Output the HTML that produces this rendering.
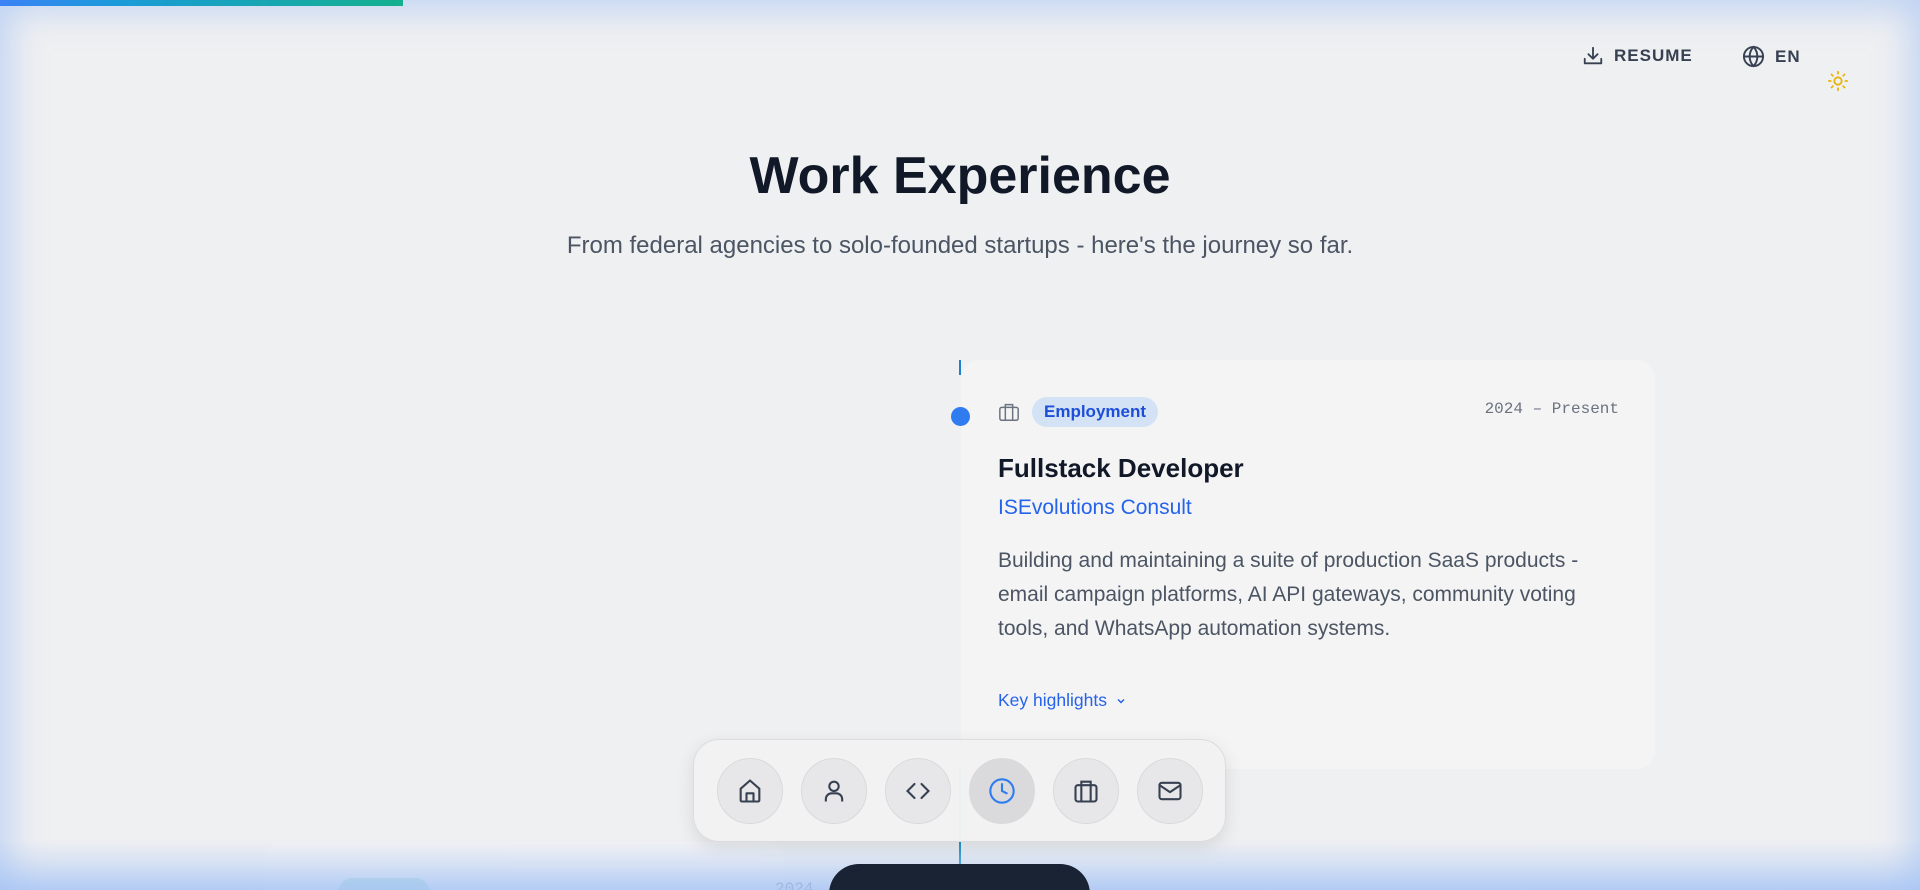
<!DOCTYPE html>
<html><head><meta charset="utf-8"><style>
*{margin:0;padding:0;box-sizing:border-box}
html,body{width:1920px;height:890px;overflow:hidden}
body{background:#eff0f2;font-family:"Liberation Sans",sans-serif;position:relative}
.vig{position:absolute;inset:0;pointer-events:none;box-shadow:inset 0 0 36px 8px rgba(140,180,245,.5);z-index:50}
.bot{position:absolute;left:0;right:0;bottom:0;height:50px;background:linear-gradient(to bottom,rgba(190,212,245,0),rgba(185,208,245,.75));z-index:40}
.bar{position:absolute;left:0;top:0;width:403px;height:6px;background:linear-gradient(90deg,#3b82f6,#1a9bd8 30%,#14b08e);z-index:60}
.top{position:absolute;font-size:17px;font-weight:bold;color:#374151;letter-spacing:1px;display:flex;align-items:center;gap:10px}
h1{position:absolute;left:0;right:0;top:146px;text-align:center;font-size:52px;font-weight:bold;color:#111827}
.sub{position:absolute;left:0;right:0;top:232px;text-align:center;font-size:24px;color:#4b5563}
.line{position:absolute;left:959px;width:2px;background:#1d7fd0}
.dot{position:absolute;left:951px;top:407px;width:19px;height:19px;border-radius:50%;background:#2f7cf0;z-index:5}
.card{position:absolute;left:961px;top:360px;width:694px;height:409px;background:#f4f4f4;border-radius:18px}
.badge{position:absolute;left:71px;top:37px;height:30px;padding:0 12px;border-radius:15px;background:#d4e2f5;color:#1d4ed8;font-size:17px;font-weight:bold;line-height:30px}
.date{position:absolute;right:36px;top:40px;font-family:"Liberation Mono",monospace;font-size:16px;color:#6b7280}
.t{position:absolute;left:37px;top:93px;font-size:26px;font-weight:bold;color:#111827}
.co{position:absolute;left:37px;top:136px;font-size:21px;color:#2563eb}
.desc{position:absolute;left:37px;top:184px;font-size:21px;line-height:34px;color:#4b5563;white-space:nowrap}
.kh{position:absolute;left:37px;top:330px;font-size:17.5px;color:#2563eb;display:flex;align-items:center;gap:8px}
.dock{position:absolute;left:693px;top:739px;width:533px;height:103px;border-radius:26px;background:rgba(242,242,242,.97);border:1px solid #dcdcdc;box-shadow:0 6px 18px rgba(0,0,0,.1);z-index:30}
.btn{position:absolute;top:18px;width:66px;height:66px;border-radius:50%;background:#e7e7e9;border:1px solid #dadadd;display:flex;align-items:center;justify-content:center}
.card2{position:absolute;left:264px;top:842px;width:520px;height:80px;background:#f2f3f5;border-radius:18px;opacity:.8}
.pill{position:absolute;left:829px;top:864px;width:261px;height:60px;border-radius:30px;background:#1a2334;z-index:55}
</style></head><body>
<div class="bar"></div>
<div class="top" style="left:1582px;top:45px">
<svg width="22" height="22" viewBox="0 0 24 24" fill="none" stroke="#374151" stroke-width="2" stroke-linecap="round" stroke-linejoin="round"><path d="M12 3v12M7 10l5 5 5-5M3 15v5h18v-5"/></svg>RESUME</div>
<div class="top" style="left:1742px;top:45px">
<svg width="23" height="23" viewBox="0 0 24 24" fill="none" stroke="#374151" stroke-width="2"><circle cx="12" cy="12" r="10"/><path d="M2 12h20M12 2c3 3 4 6.5 4 10s-1 7-4 10c-3-3-4-6.5-4-10s1-7 4-10z"/></svg>EN</div>
<svg style="position:absolute;left:1827px;top:70px" width="22" height="22" viewBox="0 0 24 24" fill="none" stroke="#eab308" stroke-width="2" stroke-linecap="round"><circle cx="12" cy="12" r="4"/><path d="M12 2v2M12 20v2M2 12h2M20 12h2M4.9 4.9l1.4 1.4M17.7 17.7l1.4 1.4M4.9 19.1l1.4-1.4M17.7 6.3l1.4-1.4"/></svg>
<h1>Work Experience</h1>
<div class="sub">From federal agencies to solo-founded startups - here's the journey so far.</div>
<div class="line" style="top:360px;height:15px"></div>
<div class="line" style="top:769px;height:121px;background:#1791c7"></div>
<div class="card">
<svg style="position:absolute;left:37px;top:41px" width="22" height="22" viewBox="0 0 24 24" fill="none" stroke="#6b7280" stroke-width="1.6"><rect x="2" y="7" width="20" height="14" rx="2"/><path d="M8 7V4h8v3M8 7v14M16 7v14"/></svg>
<div class="badge">Employment</div>
<div class="date">2024 – Present</div>
<div class="t">Fullstack Developer</div>
<div class="co">ISEvolutions Consult</div>
<div class="desc">Building and maintaining a suite of production SaaS products -<br>email campaign platforms, AI API gateways, community voting<br>tools, and WhatsApp automation systems.</div>
<div class="kh">Key highlights <svg width="12" height="12" viewBox="0 0 24 24" fill="none" stroke="#2563eb" stroke-width="3"><path d="M6 9l6 6 6-6"/></svg></div>
</div>
<div class="dot"></div>
<div class="card2">
<div style="position:absolute;left:74px;top:36px;width:92px;height:30px;border-radius:15px;background:#a8ddd6"></div>
<div style="position:absolute;left:511px;top:38px;font-family:'Liberation Mono',monospace;font-size:16px;color:#6b7280">2024</div>
</div>
<div class="dock">
<div class="btn" style="left:23px"><svg width="28" height="28" viewBox="0 0 24 24" fill="none" stroke="#374151" stroke-width="1.8" stroke-linejoin="round"><path d="M4 10l8-7 8 7v10a1 1 0 0 1-1 1H5a1 1 0 0 1-1-1z"/><path d="M9 21v-7h6v7"/></svg></div>
<div class="btn" style="left:107px"><svg width="28" height="28" viewBox="0 0 24 24" fill="none" stroke="#374151" stroke-width="1.8"><circle cx="12" cy="8" r="4"/><path d="M5 21v-2a5 5 0 0 1 5-5h4a5 5 0 0 1 5 5v2"/></svg></div>
<div class="btn" style="left:191px"><svg width="28" height="28" viewBox="0 0 24 24" fill="none" stroke="#374151" stroke-width="1.8" stroke-linecap="round"><path d="M9 6l-6 6 6 6M15 6l6 6-6 6"/></svg></div>
<div class="btn" style="left:275px;background:#dadadd"><svg width="28" height="28" viewBox="0 0 24 24" fill="none" stroke="#2f7cf0" stroke-width="1.8" stroke-linecap="round"><circle cx="12" cy="12" r="10"/><path d="M12 6v6l4 2"/></svg></div>
<div class="btn" style="left:359px"><svg width="28" height="28" viewBox="0 0 24 24" fill="none" stroke="#374151" stroke-width="1.8"><rect x="3" y="7" width="18" height="14" rx="2"/><path d="M8 7V4h8v3M8 7v14M16 7v14"/></svg></div>
<div class="btn" style="left:443px"><svg width="28" height="28" viewBox="0 0 24 24" fill="none" stroke="#374151" stroke-width="1.8" stroke-linejoin="round"><rect x="3" y="5" width="18" height="14" rx="2"/><path d="M3 7l9 6 9-6"/></svg></div>
</div>
<div class="bot"></div>
<div class="vig"></div>
<div class="pill"></div>
</body></html>
